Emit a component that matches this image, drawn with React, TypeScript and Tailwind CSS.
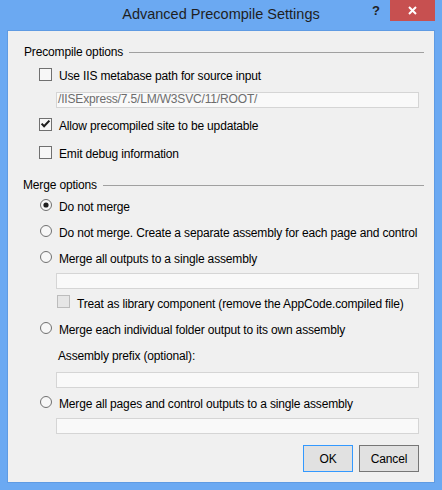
import React from "react";

function CheckBox({ checked = false, disabled = false }: { checked?: boolean; disabled?: boolean }) {
  return (
    <div
      className={
        disabled
          ? "w-[13px] h-[13px] shrink-0 border border-[#BCBCBC] bg-[#E6E6E6]"
          : "w-[13px] h-[13px] shrink-0 border border-[#707070] bg-[#F7F7F7]"
      }
    >
      {checked && (
        <svg width="11" height="11" viewBox="0 0 11 11" className="block">
          <path d="M1.6 4.6 L4.1 7.3 L9.4 1.6" fill="none" stroke="#1E1E1E" strokeWidth="2.1" />
        </svg>
      )}
    </div>
  );
}

function Radio({ checked = false }: { checked?: boolean }) {
  return (
    <svg width="12" height="12" viewBox="0 0 12 12" className="block shrink-0">
      <circle cx="6" cy="6" r="5.5" fill="#F7F7F7" stroke="#707070" strokeWidth="1" />
      {checked && <circle cx="6" cy="6" r="2.6" fill="#1E1E1E" />}
    </svg>
  );
}

function Legend({ text, pl }: { text: string; pl: string }) {
  return (
    <div className={`flex items-center h-[16px] pr-[10px] ${pl}`}>
      <span>{text}</span>
      <div className="flex-1 ml-[6px] h-px bg-[#A0A0A0]" />
    </div>
  );
}

function Field({ text }: { text?: string }) {
  return (
    <div className="ml-[48px] w-[363px] h-[16px] border border-[#D5D5D5] bg-[#F9F9F9] pl-[1px] leading-[12px] text-[#6D6D6D] overflow-hidden whitespace-nowrap">
      {text}
    </div>
  );
}

export default function App() {
  return (
    <div className="w-[442px] h-[490px] bg-[#6BA9F2] flex flex-col font-['Liberation_Sans',Arial,sans-serif] text-[12px] leading-[16px] tracking-[-0.16px] text-black">
      {/* Title bar */}
      <div className="h-[30px] flex shrink-0">
        <div className="w-[76px] shrink-0" />
        <div className="flex-1 text-center text-[14.5px] leading-[20px] pt-[4px] tracking-normal text-[#1F1F1F]">
          Advanced Precompile Settings
        </div>
        <div className="flex shrink-0 items-start">
          <div className="w-[20px] h-[21px] flex items-start justify-center pt-[3px] text-[13px] leading-[16px] font-bold text-[#222] tracking-normal">
            ?
          </div>
          <div className="w-[45px] h-[21px] ml-[4px] bg-[#C75050] flex items-center justify-center">
            <svg width="9" height="9" viewBox="0 0 9 9" className="block">
              <path d="M1 1 L8 8 M8 1 L1 8" stroke="#FFFFFF" strokeWidth="2" />
            </svg>
          </div>
          <div className="w-[7px]" />
        </div>
      </div>

      {/* Client area */}
      <div className="mx-[7px] h-[453px] border border-[#5F9BE3] bg-[#F0F0F0] flex flex-col">
        <div className="mt-[13px]">
          <Legend text="Precompile options" pl="pl-[16px]" />
        </div>

        <div className="mt-[8px] ml-[31px] flex items-start h-[16px]">
          <CheckBox />
          <span className="ml-[7px]">Use IIS metabase path for source input</span>
        </div>

        <div className="mt-[8px]">
          <Field text="/IISExpress/7.5/LM/W3SVC/11/ROOT/" />
        </div>

        <div className="mt-[10px] ml-[31px] flex items-start h-[16px]">
          <CheckBox checked />
          <span className="ml-[7px]">Allow precompiled site to be updatable</span>
        </div>

        <div className="mt-[12px] ml-[31px] flex items-start h-[16px]">
          <CheckBox />
          <span className="ml-[7px]">Emit debug information</span>
        </div>

        <div className="mt-[15px]">
          <Legend text="Merge options" pl="pl-[15px]" />
        </div>

        <div className="mt-[6px] ml-[32px] flex items-start h-[16px]">
          <Radio checked />
          <span className="ml-[7px]">Do not merge</span>
        </div>

        <div className="mt-[10px] ml-[32px] flex items-start h-[16px]">
          <Radio />
          <span className="ml-[7px] whitespace-nowrap">Do not merge. Create a separate assembly for each page and control</span>
        </div>

        <div className="mt-[10px] ml-[32px] flex items-start h-[16px]">
          <Radio />
          <span className="ml-[7px]">Merge all outputs to a single assembly</span>
        </div>

        <div className="mt-[6px]">
          <Field />
        </div>

        <div className="mt-[6px] ml-[49px] flex items-start h-[16px]">
          <CheckBox disabled />
          <span className="ml-[7px] mt-[1px] whitespace-nowrap">Treat as library component (remove the AppCode.compiled file)</span>
        </div>

        <div className="mt-[11px] ml-[32px] flex items-start h-[16px]">
          <Radio />
          <span className="ml-[7px]">Merge each individual folder output to its own assembly</span>
        </div>

        <div className="mt-[10px] ml-[50px] h-[16px]">Assembly prefix (optional):</div>

        <div className="mt-[8px]">
          <Field />
        </div>

        <div className="mt-[8px] ml-[32px] flex items-start h-[16px]">
          <Radio />
          <span className="ml-[7px]">Merge all pages and control outputs to a single assembly</span>
        </div>

        <div className="mt-[6px]">
          <Field />
        </div>

        <div className="mt-[11px] flex justify-end pr-[15px] gap-[6px]">
          <button className="w-[50px] h-[27px] border border-[#3399FF] bg-[#E1E1E1] flex items-center justify-center">
            OK
          </button>
          <button className="w-[60px] h-[27px] border border-[#767676] bg-[#E1E1E1] flex items-center justify-center">
            Cancel
          </button>
        </div>
      </div>
      <div className="h-[7px]" />
    </div>
  );
}
